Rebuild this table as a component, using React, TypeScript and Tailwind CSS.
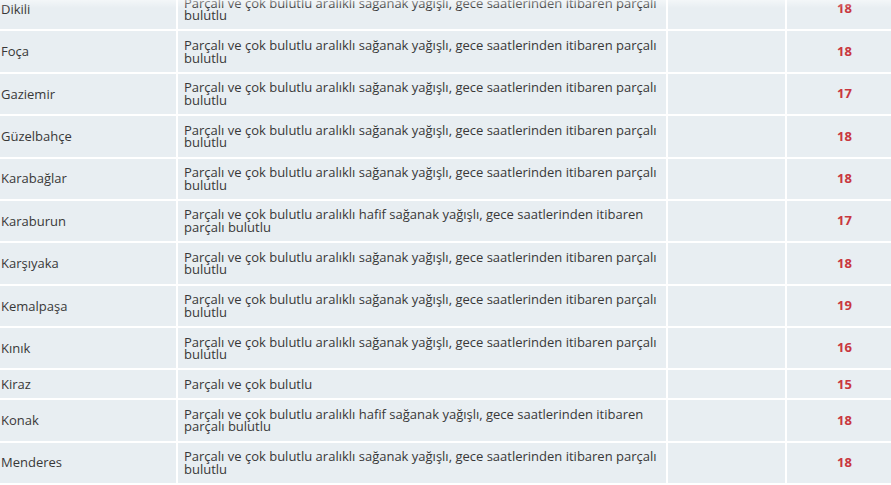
const rows = [
  { name: 'Dikili', desc: 'Parçalı ve çok bulutlu aralıklı sağanak yağışlı, gece saatlerinden itibaren parçalı bulutlu', temp: 18 },
  { name: 'Foça', desc: 'Parçalı ve çok bulutlu aralıklı sağanak yağışlı, gece saatlerinden itibaren parçalı bulutlu', temp: 18 },
  { name: 'Gaziemir', desc: 'Parçalı ve çok bulutlu aralıklı sağanak yağışlı, gece saatlerinden itibaren parçalı bulutlu', temp: 17 },
  { name: 'Güzelbahçe', desc: 'Parçalı ve çok bulutlu aralıklı sağanak yağışlı, gece saatlerinden itibaren parçalı bulutlu', temp: 18 },
  { name: 'Karabağlar', desc: 'Parçalı ve çok bulutlu aralıklı sağanak yağışlı, gece saatlerinden itibaren parçalı bulutlu', temp: 18 },
  { name: 'Karaburun', desc: 'Parçalı ve çok bulutlu aralıklı hafif sağanak yağışlı, gece saatlerinden itibaren parçalı bulutlu', temp: 17 },
  { name: 'Karşıyaka', desc: 'Parçalı ve çok bulutlu aralıklı sağanak yağışlı, gece saatlerinden itibaren parçalı bulutlu', temp: 18 },
  { name: 'Kemalpaşa', desc: 'Parçalı ve çok bulutlu aralıklı sağanak yağışlı, gece saatlerinden itibaren parçalı bulutlu', temp: 19 },
  { name: 'Kınık', desc: 'Parçalı ve çok bulutlu aralıklı sağanak yağışlı, gece saatlerinden itibaren parçalı bulutlu', temp: 16 },
  { name: 'Kiraz', desc: 'Parçalı ve çok bulutlu', temp: 15 },
  { name: 'Konak', desc: 'Parçalı ve çok bulutlu aralıklı hafif sağanak yağışlı, gece saatlerinden itibaren parçalı bulutlu', temp: 18 },
  { name: 'Menderes', desc: 'Parçalı ve çok bulutlu aralıklı sağanak yağışlı, gece saatlerinden itibaren parçalı bulutlu', temp: 18 },
];

export default function App() {
  return (
    <div className="relative w-[891px] h-[485px] overflow-hidden bg-white" style={{ fontFamily: '"Open Sans", sans-serif' }}>
      <div className="mt-[-11px] w-[903px] grid grid-cols-[176px_488px_117px_115px] gap-[2px] bg-white text-[13px] text-[#383838]">
        {rows.map((r) => (
          <div key={r.name} className="contents">
            <div className="bg-[#e8eef2] pl-[1px] py-[7.6px] leading-[12.6px] flex items-center">{r.name}</div>
            <div className="bg-[#e8eef2] px-[6px] py-[7.6px] leading-[12.6px] flex items-center">{r.desc}</div>
            <div className="bg-[#e8eef2]" />
            <div className="bg-[#e8eef2] flex items-center justify-center font-bold text-[#c9373f]">{r.temp}</div>
          </div>
        ))}
      </div>
      <div className="absolute inset-x-0 top-0 h-[8px] bg-gradient-to-b from-white/50 to-transparent pointer-events-none" />
    </div>
  );
}
